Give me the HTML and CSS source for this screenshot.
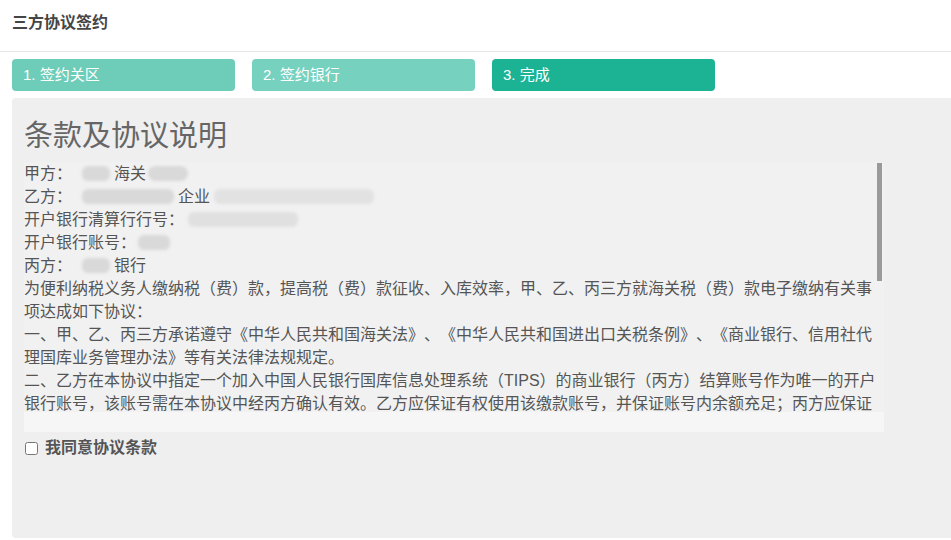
FILE: index.html
```html
<!DOCTYPE html>
<html lang="zh-CN">
<head>
  <meta charset="UTF-8">
  <meta name="viewport" content="width=device-width, initial-scale=1.0">
  <title>三方协议签约</title>
  <link rel="stylesheet" href="styles.css">
</head>
<body>

  <div class="page-head">
    <h1>三方协议签约</h1>
  </div>

  <div class="steps">
    <div class="step step-done">1. 签约关区</div>
    <div class="step step-next">2. 签约银行</div>
    <div class="step step-active">3. 完成</div>
  </div>

  <div class="panel">
    <h2>条款及协议说明</h2>

    <div class="terms-wrap">
      <div class="terms">
        <p>甲方：<span class="mask mask-a"></span>海关<span class="mask mask-b"></span></p>
        <p>乙方：<span class="mask mask-c"></span>企业<span class="mask mask-d"></span></p>
        <p>开户银行清算行行号：<span class="mask mask-e"></span></p>
        <p>开户银行账号：<span class="mask mask-f"></span></p>
        <p>丙方：<span class="mask mask-a"></span>银行</p>
        <p>为便利纳税义务人缴纳税（费）款，提高税（费）款征收、入库效率，甲、乙、丙三方就海关税（费）款电子缴纳有关事项达成如下协议：</p>
        <p>一、甲、乙、丙三方承诺遵守《中华人民共和国海关法》、《中华人民共和国进出口关税条例》、《商业银行、信用社代理国库业务管理办法》等有关法律法规规定。</p>
        <p>二、乙方在本协议中指定一个加入中国人民银行国库信息处理系统（TIPS）的商业银行（丙方）结算账号作为唯一的开户银行账号，该账号需在本协议中经丙方确认有效。乙方应保证有权使用该缴款账号，并保证账号内余额充足；丙方应保证该账号的有效性，并按照扣款指令及时足额划缴税（费）款。</p>
        <p>三、乙方通过海关业务系统发送电子支付指令，丙方收到扣款信息后，从乙方指定账号中划缴税（费）款，并将扣款结果及时返回。</p>
        <p>四、甲方根据国库信息处理系统返回的扣款成功信息，按规定办理货物放行等相关海关手续。</p>
        <p>五、因乙方账号余额不足、账号状态异常等原因造成扣款失败的，由乙方承担相应的法律责任。</p>
        <p>六、任何一方需变更或终止本协议的，应提前书面通知其他各方，并办理相关手续。</p>
      </div>
      <div class="scroll-thumb"></div>
    </div>
    <div class="terms-foot"></div>

    <label class="agree">
      <input type="checkbox">
      <span>我同意协议条款</span>
    </label>
  </div>

</body>
</html>
```

FILE: styles.css
```css
body {
  margin: 0;
  background-color: #fff;
  font-family: "Liberation Sans", "Noto Sans CJK SC", sans-serif;
  color: #555;
  overflow: hidden;
}

.page-head {
  height: 52px;
  padding: 0 12px;
  border-bottom: 1px solid #e8e8e8;
  box-sizing: border-box;
}

.page-head h1 {
  margin: 0;
  padding-top: 12px;
  font-size: 16px;
  line-height: 22px;
  font-weight: bold;
  color: #454545;
}

.steps {
  display: flex;
  gap: 17px;
  padding: 0 12px;
  margin-top: 7px;
}

.step {
  width: 223px;
  height: 32px;
  line-height: 32px;
  padding-left: 11px;
  box-sizing: border-box;
  border-radius: 4px;
  color: #fff;
  font-size: 15px;
}

.step-done {
  background-color: #6dcdb8;
}

.step-next {
  background-color: #77d1bf;
}

.step-active {
  background-color: #1bb394;
}

.panel {
  margin: 7px 0 0 12px;
  height: 440px;
  padding: 19px 12px 0;
  box-sizing: border-box;
  background-color: #efefef;
  border-radius: 4px 0 0 4px;
}

.panel h2 {
  margin: 0 0 7px;
  font-size: 29px;
  line-height: 38px;
  font-weight: normal;
  color: #666;
}

/* scrolling agreement text */
.terms-wrap {
  position: relative;
  width: 860px;
  height: 250px;
  background-color: #f1f1f1;
  overflow: hidden;
}

.terms {
  height: 100%;
  padding-right: 6px;
  font-size: 16px;
  line-height: 23px;
  color: #555;
  text-spacing-trim: space-all;
}

.terms p {
  margin: 0;
}

.scroll-thumb {
  position: absolute;
  top: 1px;
  right: 2px;
  width: 5px;
  height: 118px;
  background-color: #9a9a9a;
}

.terms-foot {
  width: 860px;
  height: 20px;
  background-color: #f6f6f6;
}

.mask {
  display: inline-block;
  height: 15px;
  vertical-align: -2px;
  background-color: #d9d9d9;
  border-radius: 6px;
  filter: blur(1.5px);
  margin: 0 4px;
}

.mask-a { width: 28px; margin-left: 10px; }
.mask-b { width: 40px; margin-left: 2px; border-radius: 10px; }
.mask-c { width: 92px; margin-left: 10px; }
.mask-d { width: 160px; background-color: #e2e2e2; }
.mask-e { width: 110px; background-color: #e0e0e0; }
.mask-f { width: 32px; margin-left: 2px; }

.agree {
  display: flex;
  align-items: center;
  gap: 7px;
  margin-top: 6px;
  padding-left: 1px;
  font-size: 16px;
  font-weight: bold;
  color: #555;
  line-height: 20px;
}

.agree input {
  margin: 0;
  width: 13px;
  height: 13px;
}
```
